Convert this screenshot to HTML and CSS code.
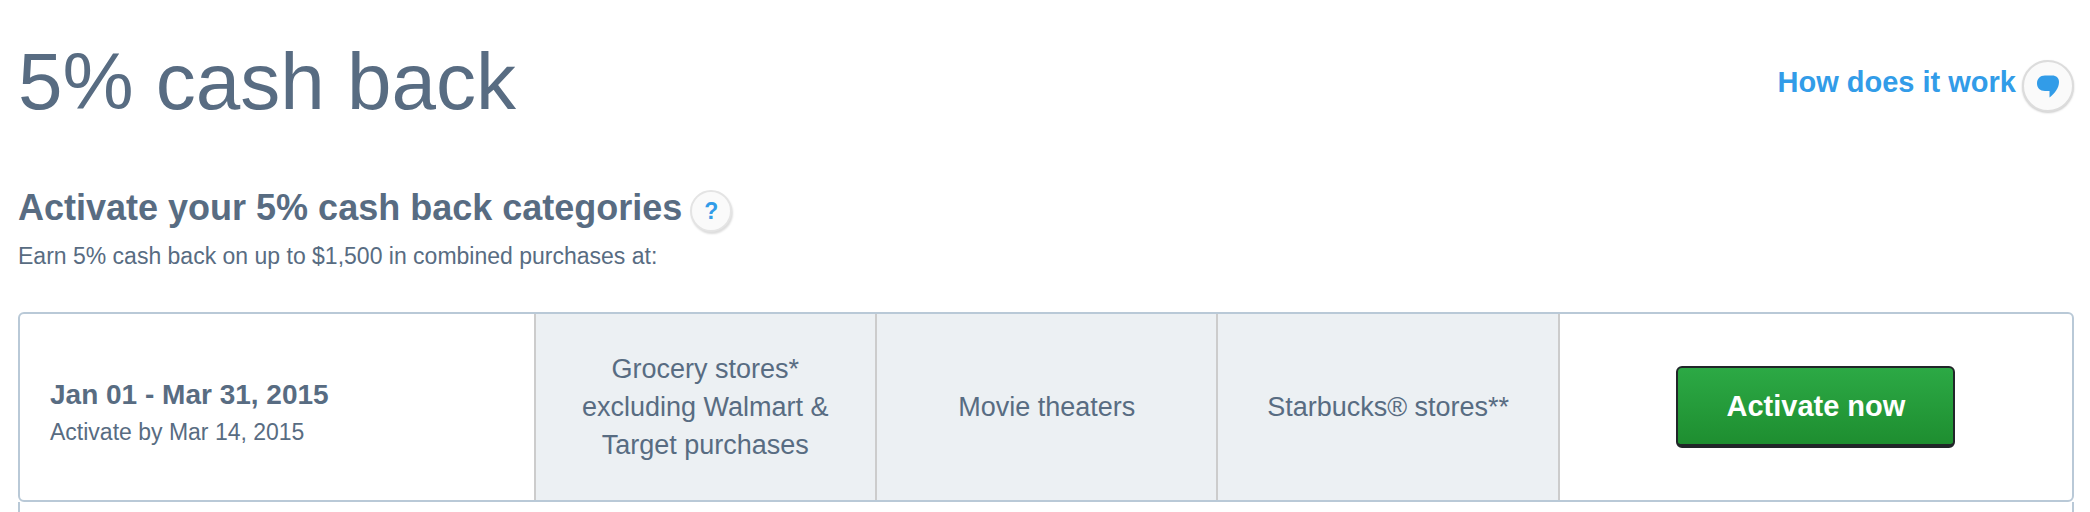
FILE: index.html
```html
<!DOCTYPE html>
<html lang="en">
<head>
    <meta charset="UTF-8">
    <meta name="viewport" content="width=device-width, initial-scale=1.0">
    <title>5% cash back</title>
    <link rel="stylesheet" href="styles.css">
</head>
<body>
    <header class="header">
        <h1>5% cash back</h1>
        <a href="#how" class="how-link">
            How does it work
            <span class="bubble">
                <svg width="24" height="24" viewBox="0 0 24 24" aria-hidden="true">
                    <path d="M9 1.500h7c4.500 0 7 2.500 7 6.500 0 6-4.500 11.500-9.500 15.500V17H9c-5 0-8-3-8-7.500s3-8 8-8z" fill="#329ce8"/>
                </svg>
            </span>
        </a>
    </header>

    <main>
        <div class="title-row">
            <h2>Activate your 5% cash back categories</h2>
            <button type="button" class="help-button">?</button>
        </div>
        <p class="intro">Earn 5% cash back on up to $1,500 in combined purchases at:</p>

        <section class="offer">
            <div class="period">
                <h3>Jan 01 - Mar 31, 2015</h3>
                <p>Activate by Mar 14, 2015</p>
            </div>
            <div class="category">Grocery stores*<br>excluding Walmart &amp;<br>Target purchases</div>
            <div class="category">Movie theaters</div>
            <div class="category">Starbucks® stores**</div>
            <div class="action">
                <button type="button" class="activate-button">Activate now</button>
            </div>
        </section>
        <section class="details"></section>
    </main>
</body>
</html>
```

FILE: styles.css
```css
* {
    box-sizing: border-box;
}

body {
    font-family: "Liberation Sans", Arial, sans-serif;
    margin: 0;
    padding: 36px 16px 0 18px;
    background-color: #fff;
    color: #586c82;
}

h1, h2, h3, p {
    margin: 0;
}

.header {
    display: flex;
    justify-content: space-between;
    align-items: center;
}

.header h1 {
    padding-bottom: 4px;
    font-size: 80px;
    font-weight: 300;
    line-height: 92px;
}

.how-link {
    display: flex;
    align-items: center;
    gap: 6px;
    color: #329ce8;
    font-size: 29px;
    font-weight: bold;
    line-height: 44px;
    text-decoration: none;
    padding-bottom: 4px;
}

.bubble {
    display: flex;
    align-items: center;
    justify-content: center;
    width: 52px;
    height: 52px;
    margin-top: 8px;
    border: 2px solid #dcdcdc;
    border-radius: 50%;
    background-color: #fafafa;
    box-shadow: 0 1px 2px #ccc;
}

.title-row {
    display: flex;
    align-items: center;
    gap: 8px;
    margin-top: 52px;
}

.title-row h2 {
    font-size: 36px;
    line-height: 48px;
}

.help-button {
    width: 42px;
    height: 42px;
    margin-top: 6px;
    padding: 0;
    border: 2px solid #e4e4e4;
    border-radius: 50%;
    background-color: #fafafa;
    box-shadow: 1px 2px 2px #ddd;
    color: #329ce8;
    font-family: inherit;
    font-size: 23px;
    font-weight: bold;
    cursor: pointer;
}

.intro {
    margin-top: 2px;
    font-size: 23px;
    line-height: 44px;
}

.offer {
    display: grid;
    grid-template-columns: 151fr 100fr 100fr 100fr 150fr;
    min-height: 190px;
    margin-top: 34px;
    border: 2px solid #b9c9d7;
    border-radius: 6px;
    overflow: hidden;
}

.period {
    display: flex;
    flex-direction: column;
    justify-content: center;
    padding: 12px 30px 0;
    border-right: 2px solid #ccc;
}

.period h3 {
    font-size: 28px;
    line-height: 38px;
}

.period p {
    font-size: 23px;
    line-height: 36px;
}

.category {
    display: flex;
    align-items: center;
    justify-content: center;
    border-right: 2px solid #ccc;
    background-color: #ecf0f3;
    font-size: 27px;
    line-height: 38px;
    text-align: center;
}

.action {
    display: flex;
    align-items: center;
    justify-content: center;
}

.activate-button {
    padding: 16px 48px;
    border: 2px solid #212629;
    border-bottom-width: 4px;
    border-radius: 6px;
    background: linear-gradient(#2ca945, #1e8e30);
    color: #fff;
    font-family: inherit;
    font-size: 29px;
    font-weight: bold;
    line-height: 44px;
    cursor: pointer;
}

.details {
    height: 10px;
    border: solid #b9c9d7;
    border-width: 0 2px;
}
```
